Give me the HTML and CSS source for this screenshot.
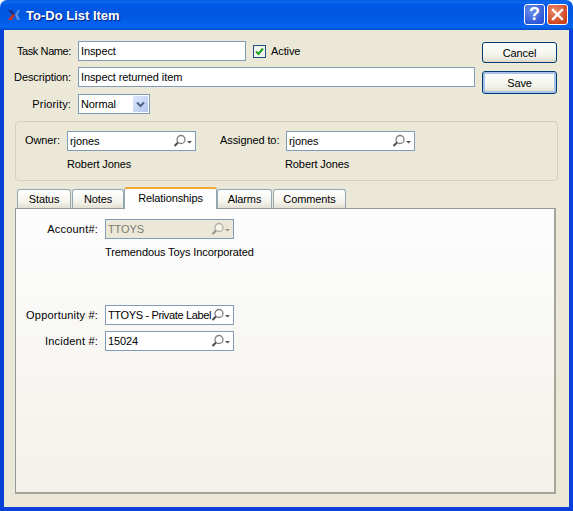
FILE: index.html
```html
<!DOCTYPE html>
<html lang="en">
<head>
<meta charset="utf-8">
<title>To-Do List Item</title>
<link rel="stylesheet" href="styles.css">
</head>
<body>
<svg class="defs" width="0" height="0" aria-hidden="true">
  <symbol id="lens" viewBox="0 0 19 14">
    <circle cx="8" cy="5.5" r="4" fill="#fff" stroke="#808080" stroke-width="1.3"/>
    <path d="M5 8.5 1.5 12" stroke="#4a4a4a" stroke-width="2" fill="none"/>
    <path d="M14 7h5l-2.5 2.5z" fill="#555"/>
  </symbol>
</svg>
<div class="window">
  <header class="titlebar">
    <svg class="app-icon" width="12" height="10" viewBox="0 0 12 10">
      <path d="M0 0h4l3 4.5H4z" fill="#1b2f80"/>
      <path d="M0 10 4 4.5h3L4 10z" fill="#c8321e"/>
      <path d="M7 4.5 10 0h2L9.500 4.500 12 10H9z" fill="#5f8fe0"/>
    </svg>
    <h1 class="title">To-Do List Item</h1>
    <div class="caption-buttons">
      <span class="cap cap-help">?</span>
      <span class="cap cap-close">
        <svg width="13" height="13" viewBox="0 0 13 13"><path d="M2 2 11 11M11 2 2 11" stroke="#fff" stroke-width="2.4" stroke-linecap="square"/></svg>
      </span>
    </div>
  </header>
  <main class="client">
    <section class="top">
      <div class="form">
        <div class="row row-1">
          <label class="label label-task">Task Name:</label>
          <div class="field field-task">Inspect</div>
          <span class="check"><svg width="9" height="9" viewBox="0 0 9 9"><path d="M1 4.5 3.5 7 8 1.5" stroke="#21a121" stroke-width="2" fill="none"/></svg></span>
          <span class="check-label">Active</span>
        </div>
        <div class="row row-2">
          <label class="label">Description:</label>
          <div class="field field-desc">Inspect returned item</div>
        </div>
        <div class="row row-3">
          <label class="label label-wide">Priority:</label>
          <div class="combo">
            <span class="combo-text">Normal</span>
            <span class="combo-btn"><svg width="9" height="7" viewBox="0 0 9 7"><path d="M1 1.5 4.5 5 8 1.5" stroke="#4d6185" stroke-width="2" fill="none"/></svg></span>
          </div>
        </div>
      </div>
      <div class="actions">
        <button class="btn">Cancel</button>
        <button class="btn btn-default">Save</button>
      </div>
    </section>

    <section class="group">
      <div class="person person-owner">
        <label class="person-label">Owner:</label>
        <div class="person-body">
          <div class="field lookup"><span class="lookup-text">rjones</span><svg class="lens" width="19" height="14"><use href="#lens"/></svg></div>
          <div class="person-name">Robert Jones</div>
        </div>
      </div>
      <div class="person person-assigned">
        <label class="person-label">Assigned to:</label>
        <div class="person-body">
          <div class="field lookup"><span class="lookup-text">rjones</span><svg class="lens" width="19" height="14"><use href="#lens"/></svg></div>
          <div class="person-name person-name-shift">Robert Jones</div>
        </div>
      </div>
    </section>

    <nav class="tabs">
      <span class="tab tab-status">Status</span>
      <span class="tab tab-notes">Notes</span>
      <span class="tab tab-active">Relationships</span>
      <span class="tab tab-alarms">Alarms</span>
      <span class="tab tab-comments">Comments</span>
    </nav>

    <section class="pane">
      <div class="pane-row">
        <label class="label pane-label">Account#:</label>
        <div class="field lookup lookup-disabled"><span class="lookup-text">TTOYS</span><svg class="lens" width="19" height="14"><use href="#lens"/></svg></div>
      </div>
      <div class="account-name">Tremendous Toys Incorporated</div>
      <div class="pane-row pane-row-opp">
        <label class="label pane-label">Opportunity #:</label>
        <div class="field lookup"><span class="lookup-text lookup-text-tight">TTOYS - Private Label</span><svg class="lens" width="19" height="14"><use href="#lens"/></svg></div>
      </div>
      <div class="pane-row pane-row-inc">
        <label class="label pane-label">Incident #:</label>
        <div class="field lookup"><span class="lookup-text">15024</span><svg class="lens" width="19" height="14"><use href="#lens"/></svg></div>
      </div>
    </section>
  </main>
</div>
</body>
</html>
```
FILE: styles.css
```css
* { box-sizing: border-box; }
html, body { margin: 0; padding: 0; background: #fff; }
.defs { position: absolute; }
body { font-family: "Liberation Sans", sans-serif; font-size: 11px; letter-spacing: -0.1px; color: #000; }
.window { width: 573px; height: 511px; display: flex; flex-direction: column; }
.titlebar {
  height: 30px; flex: none; display: flex; align-items: center;
  padding: 0 5px 0 8px; border-radius: 7px 7px 0 0;
  background: linear-gradient(180deg, #0a5ade 0, #0a6af2 2px, #0058e6 5px, #0157e0 14px, #0361ee 24px, #0464f0 27px, #0049c8 30px);
}
.app-icon { flex: none; margin-right: 6px; margin-top: 0; }
.title { margin: 0; padding-top: 1px; font-size: 13px; font-weight: bold; letter-spacing: 0; color: #fff; font-family: "Liberation Sans", sans-serif; text-shadow: 1px 1px 1px #0f1f80; flex: 1; }
.caption-buttons { display: flex; gap: 2px; margin-top: -2px; }
.cap { width: 21px; height: 21px; border: 1px solid #fff; border-radius: 3px; display: flex; align-items: center; justify-content: center; }
.cap-help { background: radial-gradient(circle at 35% 30%, #6f93ee, #2b54d6 75%); color: #fff; font: bold 18px "Liberation Sans", sans-serif; }
.cap-close { background: radial-gradient(circle at 35% 30%, #e98a6c, #d0431c 75%); }

.client {
  flex: 1; display: flex; flex-direction: column; background: #ebe8d8;
  border-left: 4px solid #0a3fd8; border-right: 4px solid #0a3fd8; border-bottom: 4px solid #0a3fd8;
}
.top { display: flex; padding-top: 11px; }
.form { width: 471px; flex: none; display: flex; flex-direction: column; }
.row { display: flex; align-items: center; height: 20px; }
.row-2 { margin-top: 6px; }
.row-3 { margin-top: 7px; }
.label { width: 67px; flex: none; text-align: right; margin-right: 7px; white-space: nowrap; }
.label-task { letter-spacing: -0.4px; }
.label-wide { letter-spacing: 0.15px; }
.field { height: 20px; border: 1px solid #7f9db9; background: #fff; padding: 0 2px; display: flex; align-items: center; white-space: nowrap; }
.field-task { width: 168px; }
.field-desc { width: 397px; }
.check { width: 13px; height: 13px; margin-left: 7px; border: 1px solid #1c5180; background: #f4f4ee; display: flex; align-items: center; justify-content: center; }
.check-label { margin-left: 5px; }
.combo { width: 72px; height: 20px; border: 1px solid #7f9db9; background: #fff; display: flex; align-items: center; justify-content: space-between; padding: 1px; }
.combo-text { padding-left: 1px; }
.combo-btn { width: 15px; height: 16px; background: linear-gradient(135deg, #dfe8fb, #b4c7f0); border-radius: 1px; display: flex; align-items: center; justify-content: center; }

.actions { margin-left: 7px; width: 75px; display: flex; flex-direction: column; padding-top: 1px; }
.btn { width: 75px; height: 21px; padding: 1px 0 0; font: inherit; letter-spacing: inherit; color: #000; border: 1px solid #003c74; border-radius: 3px; background: linear-gradient(180deg, #fff, #f3f2ea 70%, #dcd8c9); }
.btn-default { height: 23px; margin-top: 8px; box-shadow: inset 0 0 0 2px #a9c1ea; }

.group { margin: 7px 0 0 11px; width: 543px; height: 60px; flex: none; border: 1px solid #d3d0bd; border-radius: 4px; display: flex; padding-top: 9px; }
.person { display: flex; }
.person-owner { width: 204px; }
.person-owner .person-label { width: 36px; margin-left: 9px; }
.person-label { width: 60px; margin: 3px 6px 0 0; white-space: nowrap; }
.person-body { display: flex; flex-direction: column; }
.person-name { margin-top: 6px; white-space: nowrap; line-height: 14px; }
.person-name-shift { margin-left: -1px; }
.lookup { width: 129px; position: relative; }
.lookup-text { white-space: nowrap; }
.lookup-text-tight { letter-spacing: -0.35px; }
.lens { position: absolute; right: 3px; top: 2px; }
.lookup-disabled { background: #ebe8d8; color: #7a7a72; }
.lookup-disabled .lens { opacity: 0.55; }

.tabs { display: flex; margin: 6px 0 0 13px; height: 21px; align-items: flex-end; flex: none; }
.tab { height: 19px; border: 1px solid #91a7b4; border-bottom: none; border-radius: 3px 3px 0 0; background: linear-gradient(180deg, #fff, #f3f2ea 70%, #e2dfd2); display: flex; align-items: center; justify-content: center; margin-right: 1px; }
.tab-status { width: 54px; }
.tab-notes { width: 52px; margin-right: 0; }
.tab-active { width: 93px; height: 22px; margin: 0 0 -1px 0; position: relative; background: #fefefe; border: 1px solid #91a7b4; border-top: 2px solid #f0a830; border-bottom: none; padding-bottom: 3px; }
.tab-alarms { width: 55px; }
.tab-comments { width: 73px; }

.pane { margin-left: 11px; width: 541px; height: 286px; flex: none; border: 1px solid #919b9c; border-right: 2px solid #a5a59a; border-bottom: 2px solid #a5a59a; background: linear-gradient(180deg, #fdfdfe, #f3f1e9); padding-top: 10px; }
.pane-row { display: flex; align-items: center; height: 20px; }
.pane-label { width: 82px; letter-spacing: 0.2px; }
.account-name { margin: 6px 0 0 89px; line-height: 14px; white-space: nowrap; }
.pane-row-opp { margin-top: 46px; }
.pane-row-inc { margin-top: 6px; }
```
